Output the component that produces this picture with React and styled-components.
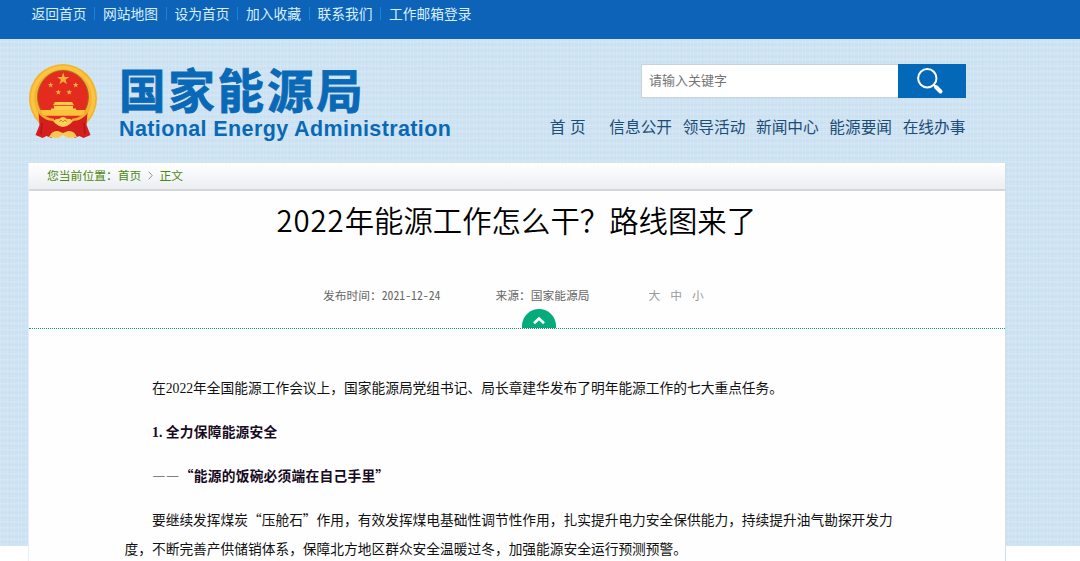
import styled, { createGlobalStyle } from 'styled-components';

const GlobalStyle = createGlobalStyle`
  body {
    margin: 0;
    background: #fff;
    font-family: "Noto Sans CJK SC", sans-serif;
    overflow: hidden;
  }
`;
const Page = styled.div`
  width: 1080px;
  height: 561px;
  overflow: hidden;
  background-color: #fff;
  background-image:
    repeating-linear-gradient(90deg, rgba(255,255,255,0.13) 0 1px, transparent 1px 4px, rgba(255,255,255,0.1) 4px 5px, transparent 5px 7px),
    repeating-linear-gradient(0deg, rgba(255,255,255,0.12) 0 1px, transparent 1px 3px, rgba(150,190,225,0.08) 3px 4px, transparent 4px 6px),
    linear-gradient(#cde2f2, #cde2f2);
  background-size: 1080px 546px;
  background-repeat: no-repeat;
`;
const TopBar = styled.nav`
  display: flex;
  box-sizing: border-box;
  height: 39px;
  padding: 3px 0 0 31.5px;
  background: #0d63b7;
`;
const TopLink = styled.a`
  display: flex;
  align-items: center;
  height: 20px;
  font-size: 13.75px;
  line-height: 20px;
  color: #d8efff;
  white-space: nowrap;
  & + &::before {
    content: '';
    width: 1px;
    height: 13px;
    margin: 0 8px 0 7.5px;
    background: #1885d4;
  }
`;
const Header = styled.header`
  display: flex;
  justify-content: space-between;
  box-sizing: border-box;
  width: 966px;
  height: 124px;
  padding: 25px 0 0 28px;
`;
const Brand = styled.div`
  display: flex;
  gap: 20px;
`;
const Names = styled.div`
  display: flex;
  flex-direction: column;
  color: #0969b6;
  white-space: nowrap;
`;
const CnName = styled.div`
  height: 53px;
  font-size: 46.5px;
  font-weight: 700;
  line-height: 48px;
  letter-spacing: 2.8px;
  -webkit-text-stroke: 0.8px #0969b6;
`;
const EnName = styled.div`
  font-family: "Liberation Sans", sans-serif;
  font-size: 21.5px;
  font-weight: 700;
  line-height: 25px;
  letter-spacing: 0.39px;
`;
const HeaderRight = styled.div`
  display: flex;
  flex-direction: column;
  align-items: flex-end;
`;
const Search = styled.form`
  display: flex;
  width: 325px;
  height: 34px;
`;
const SearchInput = styled.input`
  flex: 1;
  min-width: 0;
  box-sizing: border-box;
  padding: 0 7px 3px;
  border: 1px solid #c9d3da;
  border-right: none;
  border-radius: 0;
  background: #fff;
  font-family: inherit;
  font-size: 13px;
  outline: none;
  &::placeholder {
    color: #757575;
  }
`;
const SearchButton = styled.button`
  display: flex;
  align-items: center;
  justify-content: center;
  width: 68px;
  padding: 0 5px 0 0;
  border: none;
  background: #0468b8;
`;
const MainNav = styled.nav`
  display: flex;
  gap: 10.6px;
  margin: 17px 0.6px 0 0;
`;
const NavLink = styled.a`
  font-size: 15.7px;
  line-height: 24px;
  color: #1d4c75;
  white-space: nowrap;
  margin-right: ${(props) => (props.$home ? '13px' : '0')};
  word-spacing: ${(props) => (props.$home ? '1px' : '0')};
`;
const Panel = styled.main`
  box-sizing: border-box;
  width: 978px;
  height: 398px;
  margin-left: 28px;
  overflow: hidden;
  border-right: 1px solid #d3dde5;
  border-left: 1px solid #e8eff4;
  background: #fefefe;
`;
const Crumbs = styled.div`
  display: flex;
  align-items: center;
  box-sizing: border-box;
  height: 28px;
  padding: 0 0 2px 18px;
  border-bottom: 2px solid #d4d7da;
  background: linear-gradient(#fff, #ebeff2);
  font-size: 11.8px;
  line-height: 20px;
  color: #4e860f;
`;
const Chevron = styled.svg`
  margin: 0 6.5px 0 6.5px;
`;
const Title = styled.h1`
  margin: 7px 0 0 247.5px;
  font-size: 29.4px;
  font-weight: 350;
  line-height: 42px;
  color: #000;
  white-space: nowrap;
`;
const TitleYear = styled.span`
  letter-spacing: 0.9px;
`;
const Meta = styled.div`
  display: flex;
  align-items: center;
  height: 20px;
  margin: 45px 0 0 294px;
  font-size: 11.75px;
  line-height: 20px;
  color: #666;
  white-space: nowrap;
`;
const PublishDate = styled.span`
  width: 172.5px;
`;
const DateNum = styled.span`
  font-feature-settings: "hwid";
`;
const Source = styled.span`
  width: 153px;
`;
const Sizes = styled.span`
  display: flex;
  gap: 10px;
  color: #999;
`;
const Divider = styled.div`
  display: flex;
  align-items: flex-end;
  box-sizing: border-box;
  height: 24px;
  padding-left: 493px;
  border-bottom: 1px dotted #159d7a;
`;
const Toggle = styled.button`
  display: flex;
  justify-content: center;
  width: 34px;
  height: 19px;
  padding: 7px 0 0;
  border: none;
  border-radius: 17px 17px 0 0;
  background: #06ab7c;
`;
const Article = styled.article`
  width: 780px;
  margin: 44px 0 0 95.5px;
`;
const Paragraph = styled.p`
  margin: 0 0 15px;
  font-size: 13.72px;
  font-weight: ${(props) => (props.$bold ? 700 : 400)};
  line-height: 29px;
  letter-spacing: ${(props) => (props.$bold ? '0.25px' : '0')};
  text-indent: 2em;
  white-space: nowrap;
  color: ${(props) => (props.$bold ? '#170a22' : '#111')};
`;
const Num = styled.span`
  margin-right: ${(props) => props.$gap || '0'};
  line-height: 0;
  font-family: "Liberation Serif", serif;
`;
const Dash = styled.span`
  font-weight: 400;
  line-height: 0;
  letter-spacing: 0.2px;
  font-feature-settings: "ccmp" 0, "liga" 0;
`;

const topLinks = ['返回首页', '网站地图', '设为首页', '加入收藏', '联系我们', '工作邮箱登录'];
const navLinks = ['首 页', '信息公开', '领导活动', '新闻中心', '能源要闻', '在线办事'];

const STAR = 'M0,-1 L.23,-.31 L.95,-.31 L.36,.12 L.59,.81 L0,.38 L-.59,.81 L-.36,.12 L-.95,-.31 L-.23,-.31Z';
const stars = [
  [35.2, 15, 6.4],
  [22.7, 21, 3.1],
  [47.7, 21, 3.1],
  [30.3, 28.3, 3.1],
  [41.2, 28.3, 3.1],
];

function Emblem() {
  return (
    <svg width="71" height="76" viewBox="0 0 71 76">
      <ellipse cx="35" cy="34.5" rx="34" ry="34.5" fill="#f3b32f" />
      <ellipse cx="35" cy="34.5" rx="30.5" ry="31" fill="none" stroke="#fcc540" strokeWidth="3.4" />
      <ellipse cx="35" cy="33" rx="25.4" ry="26.5" fill="#e32b1e" stroke="#a8632a" strokeWidth="1" />
      {stars.map(([x, y, r], i) => (
        <path key={i} d={STAR} fill="#f0b13a" transform={`translate(${x} ${y}) scale(${r})`} />
      ))}
      <path d="M27 38h17l2 3.2H25zM26 42h19v2.6h3V47H23v-2.4h3z" fill="#ffcb4c" />
      <path d="M12.5 46h45l-3 6h-39z" fill="#fbc33c" />
      <path d="M15 51.8h40L44 60H26z" fill="#e32b1e" />
      <path d="M10.5 48c4 6 9 9 17 10l-2 8-2 8-5-2-4 2-7-3 4-10z" fill="#d51f1c" />
      <path d="M59.5 48c-4 6-9 9-17 10l2 8 2 8 5-2 4 2 7-3-4-10z" fill="#d51f1c" />
      <path d="M11 48q5 7 15 8M59 48q-5 7-15 8" stroke="#f3ae31" strokeWidth="2.4" fill="none" />
      <path d="M14 59l-1 11M56 59l1 11" stroke="#b3141a" strokeWidth="1.5" />
      <path d="M24 60h22l2 10H22z" fill="#d51f1c" />
      <path d="M25 57q4-3 6-2 4-4 8 0 3-1 6 2l-3 3q-7 6-14 0z" fill="#ffcf55" />
      <path d="M31 58l2-2 2 2 2-2 2 2" stroke="#d98020" strokeWidth="1" fill="none" />
      <path d="M21 73q3-7 9-6l5 2 5-2q6-1 9 6l-9 1-5-3-5 3z" fill="#f8c750" />
    </svg>
  );
}

export default function App() {
  return (
    <>
      <GlobalStyle />
      <Page lang="zh-CN">
        <TopBar>
          {topLinks.map((text) => (
            <TopLink key={text}>{text}</TopLink>
          ))}
        </TopBar>
        <Header>
          <Brand>
            <Emblem />
            <Names>
              <CnName>国家能源局</CnName>
              <EnName>National Energy Administration</EnName>
            </Names>
          </Brand>
          <HeaderRight>
            <Search>
              <SearchInput placeholder="请输入关键字" />
              <SearchButton type="button">
                <svg width="28" height="28" viewBox="0 0 28 28" fill="none" stroke="#fff">
                  <circle cx="11.3" cy="11.3" r="9.2" strokeWidth="2" />
                  <path d="M17.6 17.6l2 2" strokeWidth="2" />
                  <path d="M20 20l4.5 4.5" strokeWidth="4" strokeLinecap="round" />
                </svg>
              </SearchButton>
            </Search>
            <MainNav>
              {navLinks.map((text, idx) => (
                <NavLink key={text} $home={idx === 0}>{text}</NavLink>
              ))}
            </MainNav>
          </HeaderRight>
        </Header>
        <Panel>
          <Crumbs>
            <span>您当前位置：首页</span>
            <Chevron width="5" height="9" viewBox="0 0 5 9" fill="none" stroke="#8a9a7a">
              <path d="M.7.7l3.5 3.8L.7 8.3" />
            </Chevron>
            <span>正文</span>
          </Crumbs>
          <Title>
            <TitleYear>2022</TitleYear>年能源工作怎么干？路线图来了
          </Title>
          <Meta>
            <PublishDate>发布时间：<DateNum>2021-12-24</DateNum></PublishDate>
            <Source>来源：国家能源局</Source>
            <Sizes>
              <span>大</span>
              <span>中</span>
              <span>小</span>
            </Sizes>
          </Meta>
          <Divider>
            <Toggle>
              <svg width="12" height="9" viewBox="0 0 12 9" fill="none" stroke="#fff" strokeWidth="2.6">
                <path d="M1 7.3l5-4.8 5 4.8" />
              </svg>
            </Toggle>
          </Divider>
          <Article>
            <Paragraph>
              在<Num>2022</Num>年全国能源工作会议上，国家能源局党组书记、局长章建华发布了明年能源工作的七大重点任务。
            </Paragraph>
            <Paragraph $bold>
              <Num $gap="0.22em">1.</Num>全力保障能源安全
            </Paragraph>
            <Paragraph $bold><Dash>——</Dash>“能源的饭碗必须端在自己手里”</Paragraph>
            <Paragraph>
              要继续发挥煤炭“压舱石”作用，有效发挥煤电基础性调节性作用，扎实提升电力安全保供能力，持续提升油气勘探开发力
              <br />
              度，不断完善产供储销体系，保障北方地区群众安全温暖过冬，加强能源安全运行预测预警。
            </Paragraph>
          </Article>
        </Panel>
      </Page>
    </>
  );
}
